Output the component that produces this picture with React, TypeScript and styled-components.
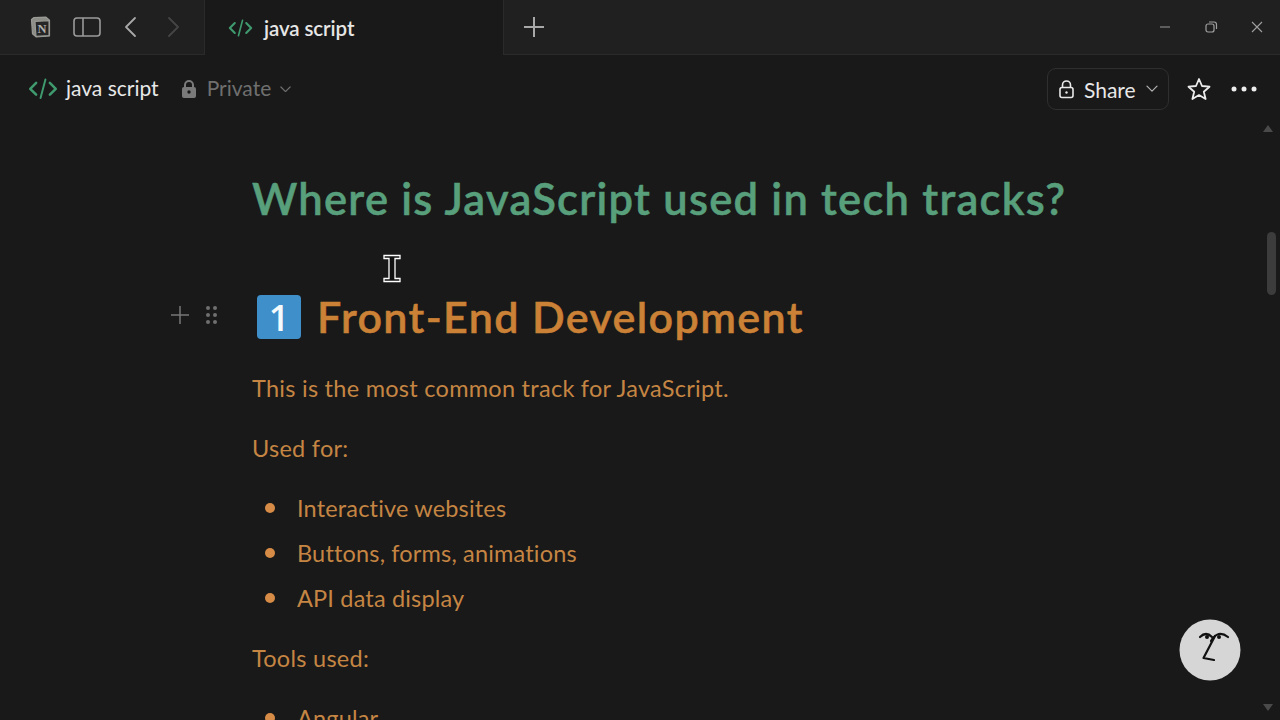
import React from "react";
import styled, { createGlobalStyle } from "styled-components";

const Global = createGlobalStyle`
  html, body { margin: 0; padding: 0; background: #191919; overflow: hidden; }
  body { font-family: "Lato", "Noto Sans", "Liberation Sans", sans-serif; }
`;
const Page = styled.div`
  position: relative; width: 1280px; height: 720px; overflow: hidden;
  display: flex; flex-direction: column; background: #191919;
`;
const TabBar = styled.div`display: flex; height: 55px; flex: none;`;
const NavCell = styled.div`
  width: 205px; box-sizing: border-box; background: #202020; border-bottom: 1px solid #2a2a2a; border-right: 1px solid #2a2a2a;
  display: flex; align-items: center; padding-left: 29px; flex: none;
`;
const IconSlot = styled.span<{ $w: number; $ml?: number }>`
  display: inline-flex; width: ${p => p.$w}px; margin-left: ${p => p.$ml ?? 0}px; justify-content: center; align-items: center; flex: none;
`;
const ActiveTab = styled.div`
  width: 298px; flex: none; display: flex; align-items: center; padding-left: 23px; box-sizing: border-box; gap: 11px;
  font-size: 20.5px; font-weight: 600; color: #e6e6e6; letter-spacing: -0.1px;
`;
const RestBar = styled.div`
  flex: 1; background: #202020; border-bottom: 1px solid #2a2a2a; border-left: 1px solid #2a2a2a;
  display: flex; align-items: center; padding-left: 18px;
`;
const WindowControls = styled.div`margin-left: auto; display: flex; align-items: center; gap: 32px; padding-right: 16px;`;
const Header = styled.div`display: flex; align-items: center; height: 68px; flex: none; padding: 0 23px 0 28px;`;
const PageName = styled.span`font-size: 21px; line-height: 24px; margin: -2px 0 0 8px; color: #e8e8e8;`;
const Privacy = styled.span`font-size: 21px; line-height: 24px; margin: -2px 0 0 10px; color: #6f6f6f;`;
const PrivacyCaret = styled.span`margin-left: 9px; display: inline-flex;`;
const ShareButton = styled.div`
  margin-left: auto; width: 122px; height: 42px; box-sizing: border-box; border: 1px solid #2f2f2f; border-radius: 9px;
  display: flex; align-items: center; padding-left: 11px; font-size: 21px; color: #e8e8e8; gap: 10px;
`;
const Actions = styled.div`display: flex; align-items: center; margin-left: 18px; gap: 20px;`;
const LockIcon = styled.svg`margin-left: 22px;`;
const Body = styled.div`flex: 1; display: flex; min-height: 0;`;
const Content = styled.main`flex: 1; padding: 50px 0 0 252px; min-width: 0;`;
const Title = styled.h1`
  margin: 0; font-size: 43.5px; line-height: 50px; font-weight: 600; color: #589f7c; white-space: nowrap; letter-spacing: 1.25px;
  -webkit-text-stroke: 0.5px currentColor;
`;
const HeadingRow = styled.div`position: relative; display: flex; align-items: center; margin-top: 69px; height: 50px;`;
const Handle = styled.div`position: absolute; left: -82px; top: 12px; display: flex; align-items: center; gap: 15px;`;
const Keycap = styled.span`
  width: 44px; height: 44px; margin-left: 5px; border-radius: 4px; background: #3f8fcb; color: #f5fafd;
  display: inline-flex; align-items: center; justify-content: center; font-size: 36px; font-weight: 600; font-family: "Open Sans", sans-serif; flex: none;
`;
const Heading = styled.h2`
  margin: 0 0 0 16px; font-size: 43px; line-height: 50px; font-weight: 600; color: #cb8136; white-space: nowrap; letter-spacing: 1.38px;
  -webkit-text-stroke: 0.5px currentColor;
`;
const Para = styled.p<{ $top: number }>`
  margin: ${p => p.$top}px 0 0; font-size: 23.5px; line-height: 30px; color: #c58543; white-space: nowrap; letter-spacing: 0.27px;
`;
const List = styled.ul`list-style: none; margin: 30px 0 0; padding: 0; display: flex; flex-direction: column; gap: 15px;`;
const Item = styled.li`
  display: flex; align-items: center; height: 30px; font-size: 23.5px; color: #c58543; white-space: nowrap; letter-spacing: 0.17px;
  &::before { content: ""; width: 10px; height: 10px; border-radius: 50%; background: #d68c46; margin: 0 22px 0 13px; flex: none; }
`;
const Scrollbar = styled.div`
  width: 24px; flex: none; position: relative;
`;
const Arrow = styled.div<{ $down?: boolean }>`
  position: absolute; right: 7px; ${p => p.$down ? "bottom: 9px; border-top: 7px solid #4a4a4a;" : "top: 2px; border-bottom: 7px solid #4a4a4a;"}
  width: 0; height: 0; border-left: 5px solid transparent; border-right: 5px solid transparent;
`;
const Thumb = styled.div`position: absolute; right: 4px; top: 109px; width: 9px; height: 63px; border-radius: 5px; background: #3c3c3c;`;
const Cursor = styled.svg`position: absolute; left: 382px; top: 254px;`;
const Avatar = styled.svg`position: absolute; left: 1179px; top: 619px;`;

const Code = ({ s, c = "#3f9a6e" }: { s: number; c?: string }) => (
  <svg width={s} height={s * 0.72} viewBox="0 0 30 22" fill="none" stroke={c} strokeWidth="2.6" strokeLinecap="round" strokeLinejoin="round">
    <path d="M8 5 2 11l6 6M22 5l6 6-6 6" />
    <path d="M17.5 1.5 12.5 20.5" strokeWidth="2" />
  </svg>
);
const Chevron = ({ c = "#8a8a8a", w = 12 }: { c?: string; w?: number }) => (
  <svg width={w} height={w * 0.6} viewBox="0 0 12 7" fill="none" stroke={c} strokeWidth="1.3" strokeLinecap="round" strokeLinejoin="round"><path d="M1 1l5 5 5-5" /></svg>
);

export default function App() {
  return (
    <Page>
      <Global />
      <TabBar>
        <NavCell>
          <IconSlot $w={22}>
            <svg width="21" height="22" viewBox="0 0 21 22">
              <path d="M1.5 3.5 4 1.5 16 1.2l3.5 3v15.6l-13.5 1-3.5-3z" fill="#8d8d87" stroke="#9a9a96" strokeWidth="1.2" strokeLinejoin="round" />
              <path d="M5 5.5 19 4.600V19.600L6 20.400z" fill="#262626" stroke="#9a9a96" strokeWidth="1.1" strokeLinejoin="round" />
              <text x="12" y="17" textAnchor="middle" fontSize="12.5" fontWeight="700" fontFamily="Liberation Serif" fill="#b0b0ac">N</text>
            </svg>
          </IconSlot>
          <IconSlot $w={28} $ml={22}>
            <svg width="28" height="22" viewBox="0 0 28 22" fill="none" stroke="#9a9a9a" strokeWidth="1.6"><rect x="1" y="2" width="26" height="18" rx="3" /><path d="M10 2v18" /></svg>
          </IconSlot>
          <IconSlot $w={14} $ml={22}>
            <svg width="13" height="22" viewBox="0 0 13 22" fill="none" stroke="#a8a8a8" strokeWidth="1.8" strokeLinecap="round" strokeLinejoin="round"><path d="M11 2 2 11l9 9" /></svg>
          </IconSlot>
          <IconSlot $w={14} $ml={29}>
            <svg width="13" height="22" viewBox="0 0 13 22" fill="none" stroke="#454545" strokeWidth="1.8" strokeLinecap="round" strokeLinejoin="round"><path d="m2 2 9 9-9 9" /></svg>
          </IconSlot>
        </NavCell>
        <ActiveTab><Code s={25} />java script</ActiveTab>
        <RestBar>
          <svg width="24" height="24" viewBox="0 0 24 24" fill="none" stroke="#a8a8a8" strokeWidth="2"><path d="M12 2v20M2 12h20" /></svg>
          <WindowControls>
            <svg width="14" height="14" viewBox="0 0 14 14" fill="none" stroke="#8f8f8f" strokeWidth="1.1"><path d="M2 7h10" /></svg>
            <svg width="14" height="14" viewBox="0 0 14 14" fill="none" stroke="#a0a0a0" strokeWidth="1.2"><rect x="2" y="4" width="8" height="8" rx="2" /><path d="M5 2h5a2.5 2.5 0 0 1 2.5 2.5V9" /></svg>
            <svg width="14" height="14" viewBox="0 0 14 14" fill="none" stroke="#a0a0a0" strokeWidth="1.1"><path d="m2 2 10 10M12 2 2 12" /></svg>
          </WindowControls>
        </RestBar>
      </TabBar>
      <Header>
        <Code s={30} />
        <PageName>java script</PageName>
        <LockIcon width="16" height="20" viewBox="0 0 16 20"><path d="M4 9V6a4 4 0 0 1 8 0v3" fill="none" stroke="#7a7a7a" strokeWidth="2" /><rect x="1" y="8" width="14" height="11" rx="2" fill="#7a7a7a" /><circle cx="8" cy="13" r="1.7" fill="#191919" /></LockIcon>
        <Privacy>Private</Privacy>
        <PrivacyCaret><Chevron c="#707070" w={11} /></PrivacyCaret>
        <ShareButton>
          <svg width="15" height="20" viewBox="0 0 15 20" fill="none" stroke="#e8e8e8" strokeWidth="1.6"><path d="M3.5 8.5V6a4 4 0 0 1 8 0v2.500" /><rect x="1" y="8.500" width="13" height="10" rx="2" /><circle cx="7.500" cy="13.500" r="1.200" fill="#e8e8e8" stroke="none" /></svg>
          Share
          <Chevron c="#b0b0b0" w={12} />
        </ShareButton>
        <Actions>
          <svg width="24" height="24" viewBox="0 0 24 24" fill="none" stroke="#ececec" strokeWidth="1.8" strokeLinejoin="round"><path d="m12 2 3 7 7.500.7-5.700 5 1.800 7.300L12 18.100 5.400 22l1.800-7.300-5.700-5L9 9z" /></svg>
          <svg width="26" height="6" viewBox="0 0 26 6" fill="#ececec"><circle cx="3" cy="3" r="2.500" /><circle cx="13" cy="3" r="2.500" /><circle cx="23" cy="3" r="2.500" /></svg>
        </Actions>
      </Header>
      <Body>
        <Content>
          <Title>Where is JavaScript used in tech tracks?</Title>
          <HeadingRow>
            <Handle>
              <svg width="20" height="20" viewBox="0 0 20 20" fill="none" stroke="#777" strokeWidth="1.5"><path d="M10 1v18M1 10h18" /></svg>
              <svg width="13" height="22" viewBox="0 0 13 22" fill="#6f6f6f"><circle cx="3" cy="4" r="2" /><circle cx="10" cy="4" r="2" /><circle cx="3" cy="11" r="2" /><circle cx="10" cy="11" r="2" /><circle cx="3" cy="18" r="2" /><circle cx="10" cy="18" r="2" /></svg>
            </Handle>
            <Keycap>1</Keycap>
            <Heading>Front-End Development</Heading>
          </HeadingRow>
          <Para $top={31}>This is the most common track for JavaScript.</Para>
          <Para $top={30}>Used for:</Para>
          <List>
            <Item>Interactive websites</Item>
            <Item>Buttons, forms, animations</Item>
            <Item>API data display</Item>
          </List>
          <Para $top={30}>Tools used:</Para>
          <List><Item>Angular</Item></List>
        </Content>
        <Scrollbar>
          <Arrow />
          <Thumb />
          <Arrow $down />
        </Scrollbar>
      </Body>
      <Cursor width="20" height="30" viewBox="0 0 20 30" fill="#111" stroke="#fff" strokeWidth="1.3">
        <path d="M2 1.500h16v3h-5v20h5v3H2v-3h5v-20H2z" />
      </Cursor>
      <Avatar width="62" height="62" viewBox="0 0 62 62">
        <circle cx="31" cy="31" r="30.500" fill="#d6d6d6" />
        <g fill="none" stroke="#111" strokeWidth="2.2" strokeLinecap="round" strokeLinejoin="round">
          <path d="M21 18Q27 12 33 18" />
          <path d="M32 22Q39 10 49 18" />
          <path d="M36 17 24.500 39 35 41" />
        </g>
        <circle cx="28" cy="18" r="2" fill="#111" /><circle cx="40" cy="18" r="2" fill="#111" />
      </Avatar>
    </Page>
  );
}
